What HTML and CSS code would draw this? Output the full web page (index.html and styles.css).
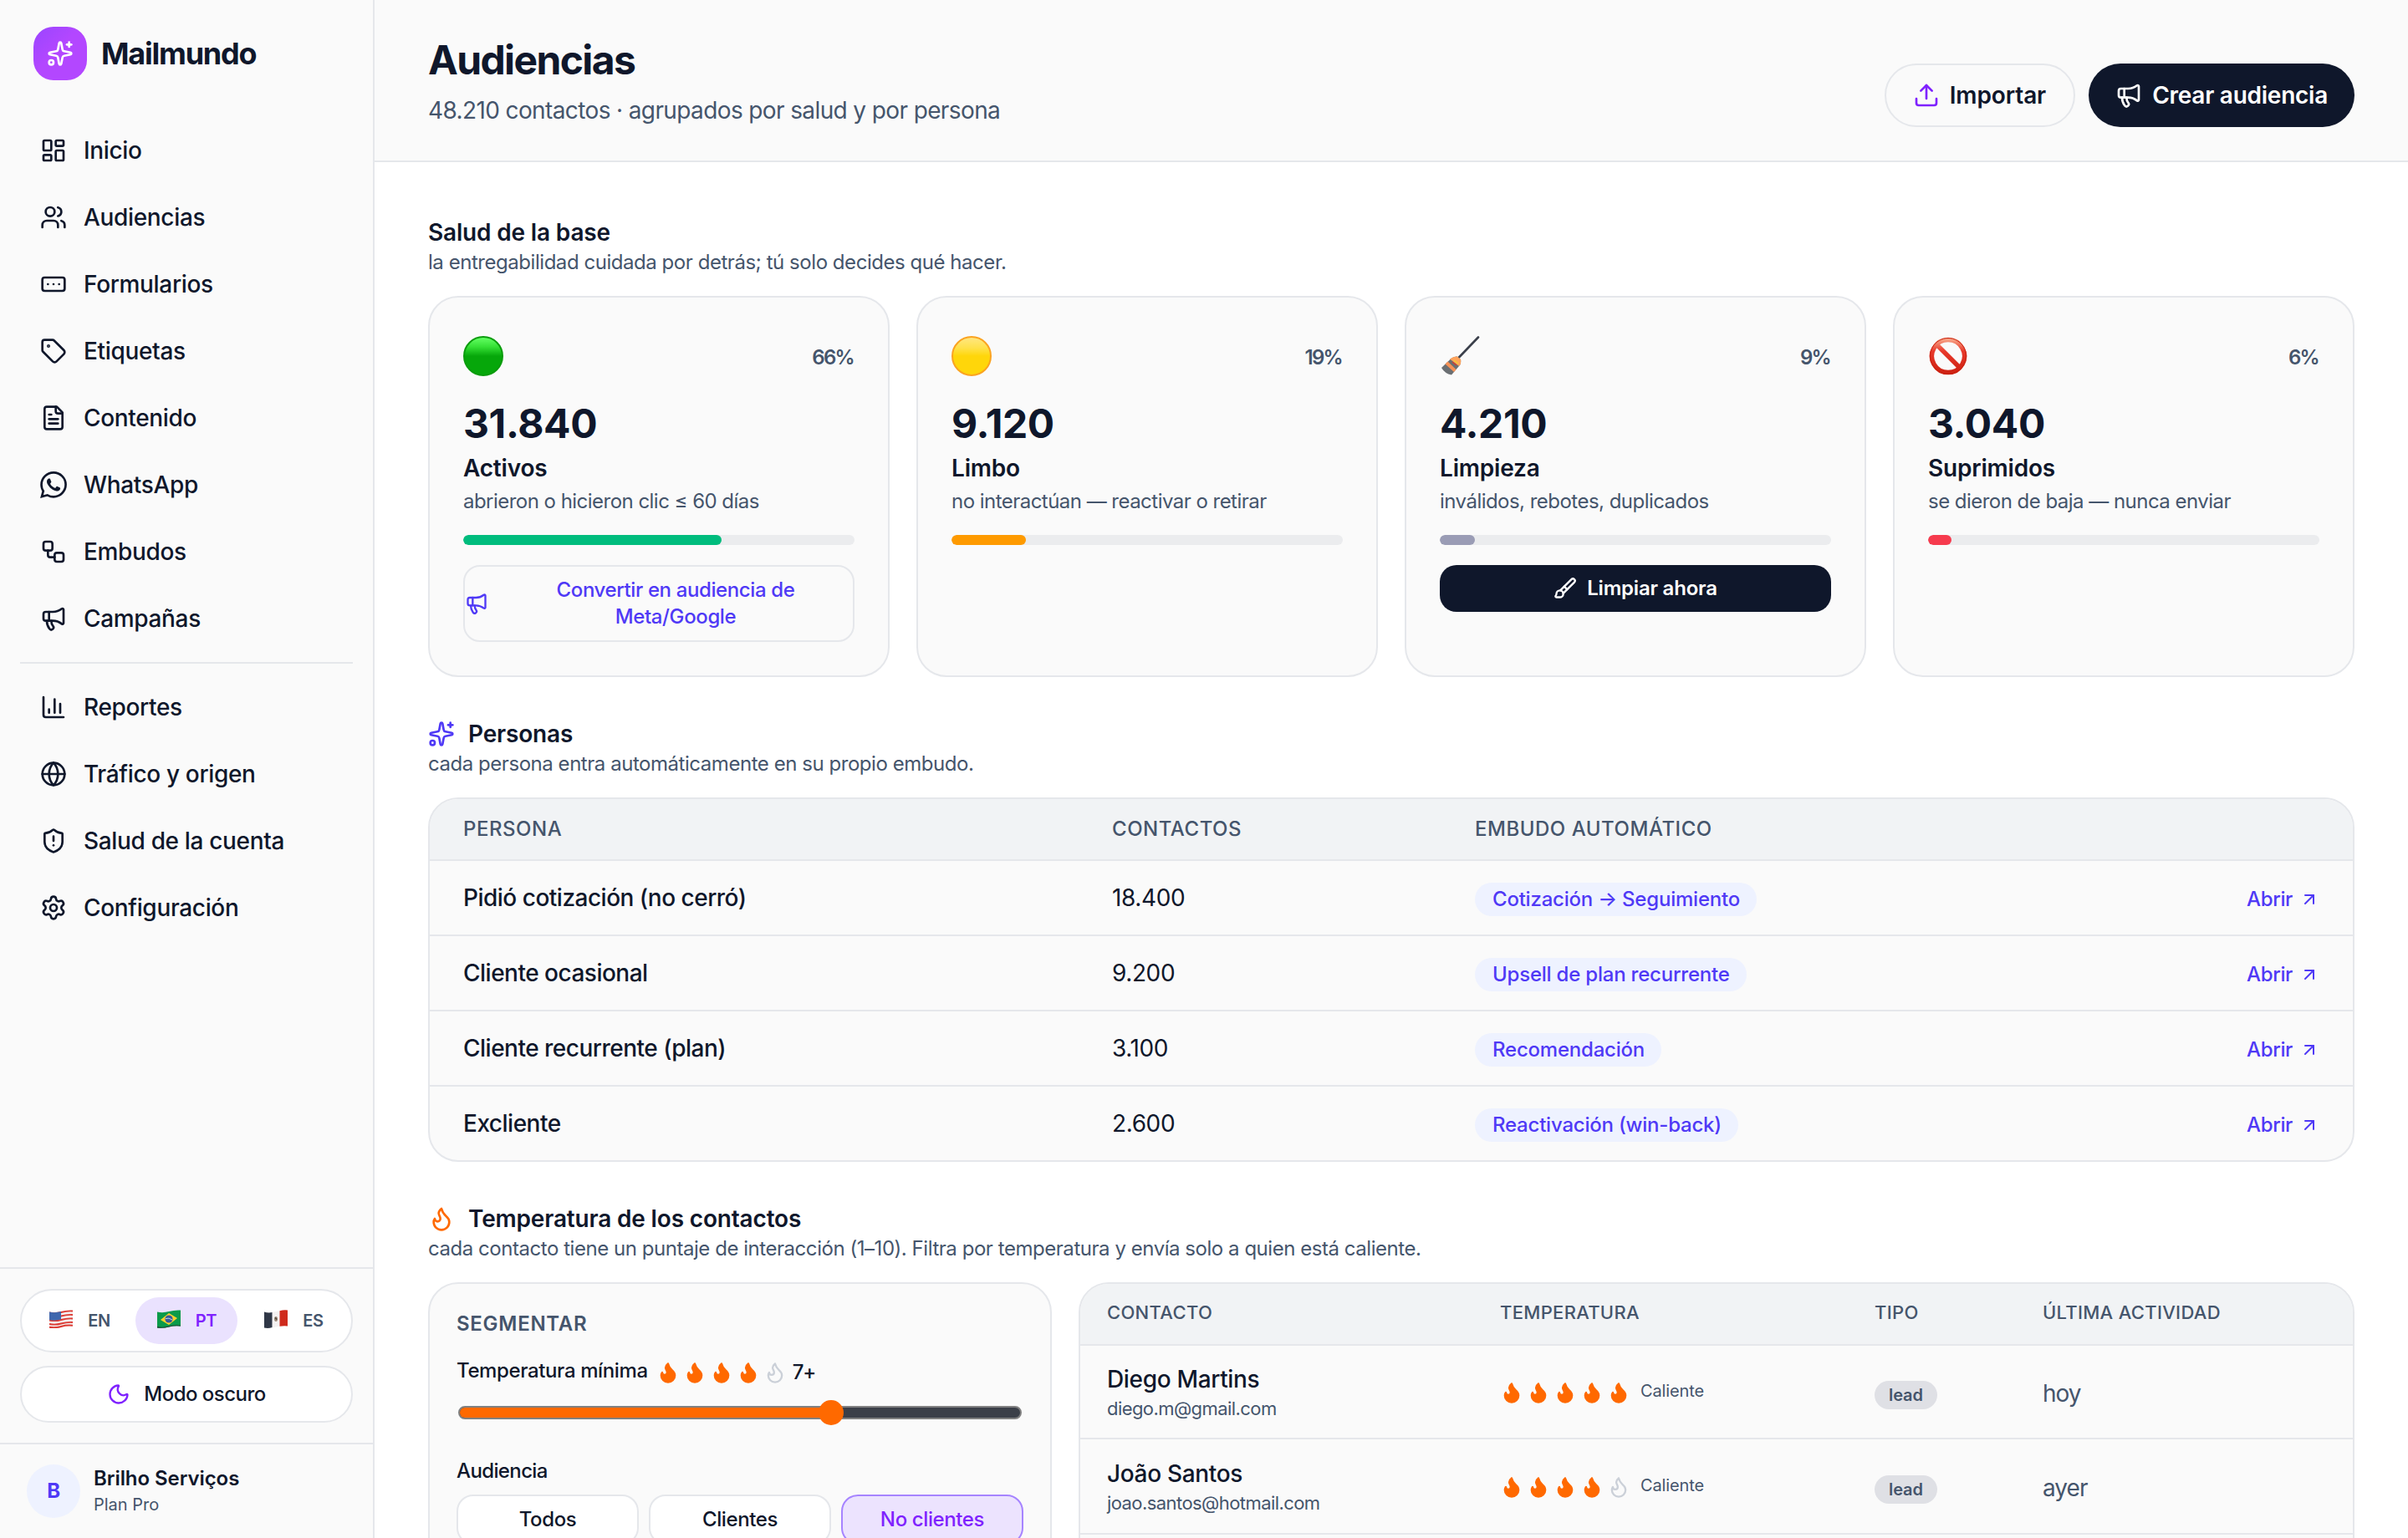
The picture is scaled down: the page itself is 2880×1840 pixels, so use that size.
FILE: index.html
```
<!DOCTYPE html>
<html lang="es">
<head>
    <meta charset="UTF-8">
    <meta name="viewport" content="width=device-width, initial-scale=1.0">
    <title>Mailmundo - Audiencias</title>
    <link rel="stylesheet" href="styles.css">
</head>
<body>
    <!-- Icon sprite -->
    <svg class="sprite" xmlns="http://www.w3.org/2000/svg">
        <symbol id="i-sparkles" viewBox="0 0 24 24"><path d="M11.017 2.814a1 1 0 0 1 1.966 0l1.051 5.558a2 2 0 0 0 1.594 1.594l5.558 1.051a1 1 0 0 1 0 1.966l-5.558 1.051a2 2 0 0 0-1.594 1.594l-1.051 5.558a1 1 0 0 1-1.966 0l-1.051-5.558a2 2 0 0 0-1.594-1.594l-5.558-1.051a1 1 0 0 1 0-1.966l5.558-1.051a2 2 0 0 0 1.594-1.594z"/><path d="M20 2v4"/><path d="M22 4h-4"/><circle cx="4" cy="20" r="2"/></symbol>
        <symbol id="i-dashboard" viewBox="0 0 24 24"><rect width="7" height="9" x="3" y="3" rx="1"/><rect width="7" height="5" x="14" y="3" rx="1"/><rect width="7" height="9" x="14" y="12" rx="1"/><rect width="7" height="5" x="3" y="16" rx="1"/></symbol>
        <symbol id="i-users" viewBox="0 0 24 24"><path d="M16 21v-2a4 4 0 0 0-4-4H6a4 4 0 0 0-4 4v2"/><path d="M16 3.128a4 4 0 0 1 0 7.744"/><path d="M22 21v-2a4 4 0 0 0-3-3.87"/><circle cx="9" cy="7" r="4"/></symbol>
        <symbol id="i-form" viewBox="0 0 24 24"><rect width="20" height="12" x="2" y="6" rx="2"/><path d="M12 12h.01"/><path d="M17 12h.01"/><path d="M7 12h.01"/></symbol>
        <symbol id="i-tag" viewBox="0 0 24 24"><path d="M12.586 2.586A2 2 0 0 0 11.172 2H4a2 2 0 0 0-2 2v7.172a2 2 0 0 0 .586 1.414l8.704 8.704a2.426 2.426 0 0 0 3.42 0l6.58-6.58a2.426 2.426 0 0 0 0-3.42z"/><circle cx="7.5" cy="7.5" r=".5" fill="currentColor"/></symbol>
        <symbol id="i-file" viewBox="0 0 24 24"><path d="M15 2H6a2 2 0 0 0-2 2v16a2 2 0 0 0 2 2h12a2 2 0 0 0 2-2V7Z"/><path d="M14 2v4a2 2 0 0 0 2 2h4"/><path d="M10 9H8"/><path d="M16 13H8"/><path d="M16 17H8"/></symbol>
        <symbol id="i-whatsapp" viewBox="0 0 24 24"><path fill="currentColor" stroke="none" d="M17.472 14.382c-.297-.149-1.758-.867-2.03-.967-.273-.099-.471-.148-.67.15-.197.297-.767.966-.94 1.164-.173.199-.347.223-.644.075-.297-.15-1.255-.463-2.39-1.475-.883-.788-1.48-1.761-1.653-2.059-.173-.297-.018-.458.13-.606.134-.133.298-.347.446-.52.149-.174.198-.298.298-.497.099-.198.05-.371-.025-.52-.075-.149-.669-1.612-.916-2.207-.242-.579-.487-.5-.669-.51-.173-.008-.371-.01-.57-.01-.198 0-.52.074-.792.372-.272.297-1.04 1.016-1.04 2.479 0 1.462 1.065 2.875 1.213 3.074.149.198 2.096 3.2 5.077 4.487.709.306 1.262.489 1.694.625.712.227 1.36.195 1.871.118.571-.085 1.758-.719 2.006-1.413.248-.694.248-1.289.173-1.413-.074-.124-.272-.198-.57-.347m-5.421 7.403h-.004a9.87 9.87 0 01-5.031-1.378l-.361-.214-3.741.982.998-3.648-.235-.374a9.86 9.86 0 01-1.51-5.26c.001-5.45 4.436-9.884 9.888-9.884 2.64 0 5.122 1.03 6.988 2.898a9.825 9.825 0 012.893 6.994c-.003 5.45-4.437 9.884-9.885 9.884m8.413-18.297A11.815 11.815 0 0012.05 0C5.495 0 .16 5.335.157 11.892c0 2.096.547 4.142 1.588 5.945L.057 24l6.305-1.654a11.882 11.882 0 005.683 1.448h.005c6.554 0 11.89-5.335 11.893-11.893a11.821 11.821 0 00-3.48-8.413Z"/></symbol>
        <symbol id="i-workflow" viewBox="0 0 24 24"><rect width="8" height="8" x="3" y="3" rx="2"/><path d="M7 11v4a2 2 0 0 0 2 2h4"/><rect width="8" height="8" x="13" y="13" rx="2"/></symbol>
        <symbol id="i-megaphone" viewBox="0 0 24 24"><path d="M11 6a13 13 0 0 0 8.4-2.8A1 1 0 0 1 21 4v12a1 1 0 0 1-1.6.8A13 13 0 0 0 11 14H5a2 2 0 0 1-2-2V8a2 2 0 0 1 2-2z"/><path d="M6 14a12 12 0 0 0 2.4 7.2 2 2 0 0 0 3.2-2.4A8 8 0 0 1 10 14"/><path d="M8 6v8"/></symbol>
        <symbol id="i-chart" viewBox="0 0 24 24"><path d="M3 3v16a2 2 0 0 0 2 2h16"/><path d="M18 17V9"/><path d="M13 17V5"/><path d="M8 17v-3"/></symbol>
        <symbol id="i-globe" viewBox="0 0 24 24"><circle cx="12" cy="12" r="10"/><path d="M12 2a14.5 14.5 0 0 0 0 20 14.5 14.5 0 0 0 0-20"/><path d="M2 12h20"/></symbol>
        <symbol id="i-shield" viewBox="0 0 24 24"><path d="M20 13c0 5-3.5 7.5-7.66 8.95a1 1 0 0 1-.67-.01C7.5 20.5 4 18 4 13V6a1 1 0 0 1 1-1c2 0 4.5-1.2 6.24-2.72a1.17 1.17 0 0 1 1.52 0C14.51 3.81 17 5 19 5a1 1 0 0 1 1 1z"/><path d="M12 8v4"/><path d="M12 16h.01"/></symbol>
        <symbol id="i-settings" viewBox="0 0 24 24"><path d="M9.671 4.136a2.34 2.34 0 0 1 4.659 0 2.34 2.34 0 0 0 3.319 1.915 2.34 2.34 0 0 1 2.33 4.033 2.34 2.34 0 0 0 0 3.831 2.34 2.34 0 0 1-2.33 4.033 2.34 2.34 0 0 0-3.319 1.915 2.34 2.34 0 0 1-4.659 0 2.34 2.34 0 0 0-3.32-1.915 2.34 2.34 0 0 1-2.33-4.033 2.34 2.34 0 0 0 0-3.831A2.34 2.34 0 0 1 6.35 6.051a2.34 2.34 0 0 0 3.319-1.915"/><circle cx="12" cy="12" r="3"/></symbol>
        <symbol id="i-moon" viewBox="0 0 24 24"><path d="M20.985 12.486a9 9 0 1 1-9.473-9.472c.405-.022.617.46.402.803a6 6 0 0 0 8.268 8.268c.344-.215.825-.004.803.401"/></symbol>
        <symbol id="i-upload" viewBox="0 0 24 24"><path d="M12 3v12"/><path d="m17 8-5-5-5 5"/><path d="M21 15v4a2 2 0 0 1-2 2H5a2 2 0 0 1-2-2v-4"/></symbol>
        <symbol id="i-flame" viewBox="0 0 24 24"><path d="M12 3q1 4 4 6.5t3 5.5a1 1 0 0 1-14 0 5 5 0 0 1 1-3 1 1 0 0 0 5 0c0-2-1.5-3-1.5-5q0-2 2.5-4"/></symbol>
        <symbol id="i-brush" viewBox="0 0 24 24"><path d="m11 10 3 3"/><path d="M6.5 21A3.5 3.5 0 1 0 3 17.5a2.62 2.62 0 0 1-.708 1.792A1 1 0 0 0 3 21z"/><path d="M9.969 17.031 21.378 5.624a1 1 0 0 0-3.002-3.002L6.967 14.031"/></symbol>
        <symbol id="i-arrow" viewBox="0 0 24 24"><path d="M7 7h10v10"/><path d="M7 17 17 7"/></symbol>
    </svg>

    <div class="app">
        <aside class="sidebar">
            <div class="brand">
                <span class="brand-logo"><svg class="icon"><use href="#i-sparkles"/></svg></span>
                <span class="brand-name">Mailmundo</span>
            </div>

            <nav class="nav">
                <a class="nav-item"><svg class="icon"><use href="#i-dashboard"/></svg>Inicio</a>
                <a class="nav-item"><svg class="icon"><use href="#i-users"/></svg>Audiencias</a>
                <a class="nav-item"><svg class="icon"><use href="#i-form"/></svg>Formularios</a>
                <a class="nav-item"><svg class="icon"><use href="#i-tag"/></svg>Etiquetas</a>
                <a class="nav-item"><svg class="icon"><use href="#i-file"/></svg>Contenido</a>
                <a class="nav-item"><svg class="icon"><use href="#i-whatsapp"/></svg>WhatsApp</a>
                <a class="nav-item"><svg class="icon"><use href="#i-workflow"/></svg>Embudos</a>
                <a class="nav-item"><svg class="icon"><use href="#i-megaphone"/></svg>Campañas</a>
                <div class="nav-divider"></div>
                <a class="nav-item"><svg class="icon"><use href="#i-chart"/></svg>Reportes</a>
                <a class="nav-item"><svg class="icon"><use href="#i-globe"/></svg>Tráfico y origen</a>
                <a class="nav-item"><svg class="icon"><use href="#i-shield"/></svg>Salud de la cuenta</a>
                <a class="nav-item"><svg class="icon"><use href="#i-settings"/></svg>Configuración</a>
            </nav>

            <div class="preferences">
                <div class="lang-switch">
                    <button class="lang">
                        <svg class="flag" viewBox="0 0 28 22">
                            <path d="M0 2.500Q7 4 14 2T28 .5V19.500Q21 18.500 14 20.500T0 21.500Z" fill="#f4eeee"/>
                            <path d="M0 3.500Q7 5 14 3T28 1.500M0 8Q7 9.500 14 7.500T28 6M0 12.500Q7 14 14 12T28 10.500M0 17Q7 18.500 14 16.500T28 15M0 20.800Q7 22 14 20T28 18.800" fill="none" stroke="#dc3a33" stroke-width="1.900"/>
                            <path d="M0 2.500Q7 4 14 2V11.500Q7 13.500 0 12Z" fill="#3f66ad"/>
                        </svg>
                        EN
                    </button>
                    <button class="lang active">
                        <svg class="flag" viewBox="0 0 28 22">
                            <path d="M0 2.500Q7 4 14 2T28 .5V19.500Q21 18.500 14 20.500T0 21.500Z" fill="#0a9a4a"/>
                            <path d="M0 20Q7 21.500 14 19.500T28 18.500V19.500Q21 18.500 14 20.500T0 21.500Z" fill="#1e4434"/>
                            <path d="M4 12 14 4 24 10 14 18Z" fill="#fdd22d"/>
                            <circle cx="14" cy="11" r="4.600" fill="#35599a"/>
                            <path d="M10 10.500q4-1.500 8 1.500" fill="none" stroke="#c9d6ea" stroke-width="1"/>
                        </svg>
                        PT
                    </button>
                    <button class="lang">
                        <svg class="flag" viewBox="0 0 28 22">
                            <path d="M0 2.500Q7 4 14 2T28 .5V19.500Q21 18.500 14 20.500T0 21.500Z" fill="#f5f2f2"/>
                            <path d="M0 2.500Q5 4 9.500 3V21Q5 22.500 0 21.500Z" fill="#2f3746"/>
                            <path d="M18.500 1.200Q23 0 28 .5V19.500Q23 19 18.500 19.800Z" fill="#cf2a1c"/>
                            <ellipse cx="14" cy="11" rx="2" ry="3" fill="#9c8a78"/>
                            <path d="M13 9.500l2.200 2" stroke="#4a4238" stroke-width="1.200"/>
                        </svg>
                        ES
                    </button>
                </div>
                <button class="theme-btn"><svg class="icon"><use href="#i-moon"/></svg>Modo oscuro</button>
            </div>

            <div class="account">
                <span class="avatar">B</span>
                <div>
                    <div class="account-name">Brilho Serviços</div>
                    <div class="account-plan">Plan Pro</div>
                </div>
            </div>
        </aside>

        <main class="main">
            <header class="page-header">
                <div>
                    <h1>Audiencias</h1>
                    <p class="subtitle">48.210 contactos · agrupados por salud y por persona</p>
                </div>
                <div class="header-actions">
                    <button class="btn btn-light"><svg class="icon"><use href="#i-upload"/></svg>Importar</button>
                    <button class="btn btn-dark"><svg class="icon"><use href="#i-megaphone"/></svg>Crear audiencia</button>
                </div>
            </header>

            <div class="content">
                <section>
                    <h2>Salud de la base</h2>
                    <p class="section-desc">la entregabilidad cuidada por detrás; tú solo decides qué hacer.</p>

                    <div class="health-grid">
                        <div class="card health-card">
                            <div class="health-top"><span class="dot dot-green"></span><span class="percent">66%</span></div>
                            <div class="number">31.840</div>
                            <div class="health-label">Activos</div>
                            <div class="health-desc">abrieron o hicieron clic ≤ 60 días</div>
                            <div class="bar"><div class="bar-fill green" style="width: 66%"></div></div>
                            <button class="card-btn outline"><svg class="icon"><use href="#i-megaphone"/></svg><span>Convertir en audiencia de<br>Meta/Google</span></button>
                        </div>

                        <div class="card health-card">
                            <div class="health-top"><span class="dot dot-yellow"></span><span class="percent">19%</span></div>
                            <div class="number">9.120</div>
                            <div class="health-label">Limbo</div>
                            <div class="health-desc">no interactúan — reactivar o retirar</div>
                            <div class="bar"><div class="bar-fill amber" style="width: 19%"></div></div>
                        </div>

                        <div class="card health-card">
                            <div class="health-top">
                                <svg class="emoji" viewBox="0 0 48 48">
                                    <path d="M46 1.500 23 25.500" stroke="#3a3f4a" stroke-width="2.600" stroke-linecap="round"/>
                                    <path d="M21 24.500 25 28Q26 33 23 36L14 46.500Q6 45 2 38L14 26.500Q18 24 21 24.500Z" fill="#6b6f73"/>
                                    <path d="M21 24.500 25 28Q26 33 23 36L12 27.500Q17 24 21 24.500Z" fill="#ffa35c"/>
                                    <path d="M9.500 30.500 19.500 40 17 43 6.500 33.500Z" fill="#f79256"/>
                                    <path d="M17 29l5 4" stroke="#f8c33a" stroke-width="2"/>
                                    <path d="M15 31l5 4" stroke="#d93c2c" stroke-width="1.500"/>
                                </svg>
                                <span class="percent">9%</span>
                            </div>
                            <div class="number">4.210</div>
                            <div class="health-label">Limpieza</div>
                            <div class="health-desc">inválidos, rebotes, duplicados</div>
                            <div class="bar"><div class="bar-fill gray" style="width: 9%"></div></div>
                            <button class="card-btn solid"><svg class="icon"><use href="#i-brush"/></svg>Limpiar ahora</button>
                        </div>

                        <div class="card health-card">
                            <div class="health-top">
                                <svg class="emoji" viewBox="0 0 48 48">
                                    <defs>
                                        <linearGradient id="ban" x1="0" y1="0" x2="0" y2="1">
                                            <stop offset="0" stop-color="#f7a184"/>
                                            <stop offset=".35" stop-color="#e8392b"/>
                                            <stop offset="1" stop-color="#cf2213"/>
                                        </linearGradient>
                                    </defs>
                                    <path d="M24 4.500a19.500 19.500 0 1 1-.01 0M10.500 10.500l27 27" fill="none" stroke="url(#ban)" stroke-width="5.500"/>
                                    <path d="M24 2.500a21.500 21.500 0 1 1-.01 0" fill="none" stroke="#c9210f" stroke-width="1"/>
                                </svg>
                                <span class="percent">6%</span>
                            </div>
                            <div class="number">3.040</div>
                            <div class="health-label">Suprimidos</div>
                            <div class="health-desc">se dieron de baja — nunca enviar</div>
                            <div class="bar"><div class="bar-fill red" style="width: 6%"></div></div>
                        </div>
                    </div>
                </section>

                <section>
                    <h2><svg class="icon indigo"><use href="#i-sparkles"/></svg>Personas</h2>
                    <p class="section-desc">cada persona entra automáticamente en su propio embudo.</p>

                    <div class="card table-card">
                        <table class="persona-table">
                            <thead>
                                <tr><th class="col-persona">Persona</th><th class="col-count">Contactos</th><th>Embudo automático</th><th class="col-open"></th></tr>
                            </thead>
                            <tbody>
                                <tr>
                                    <td class="strong">Pidió cotización (no cerró)</td>
                                    <td class="count">18.400</td>
                                    <td><span class="chip">Cotización → Seguimiento</span></td>
                                    <td><a class="open">Abrir<svg class="icon"><use href="#i-arrow"/></svg></a></td>
                                </tr>
                                <tr>
                                    <td class="strong">Cliente ocasional</td>
                                    <td class="count">9.200</td>
                                    <td><span class="chip">Upsell de plan recurrente</span></td>
                                    <td><a class="open">Abrir<svg class="icon"><use href="#i-arrow"/></svg></a></td>
                                </tr>
                                <tr>
                                    <td class="strong">Cliente recurrente (plan)</td>
                                    <td class="count">3.100</td>
                                    <td><span class="chip">Recomendación</span></td>
                                    <td><a class="open">Abrir<svg class="icon"><use href="#i-arrow"/></svg></a></td>
                                </tr>
                                <tr>
                                    <td class="strong">Excliente</td>
                                    <td class="count">2.600</td>
                                    <td><span class="chip">Reactivación (win-back)</span></td>
                                    <td><a class="open">Abrir<svg class="icon"><use href="#i-arrow"/></svg></a></td>
                                </tr>
                            </tbody>
                        </table>
                    </div>
                </section>

                <section>
                    <h2><svg class="icon orange"><use href="#i-flame"/></svg>Temperatura de los contactos</h2>
                    <p class="section-desc">cada contacto tiene un puntaje de interacción (1–10). Filtra por temperatura y envía solo a quien está caliente.</p>

                    <div class="temperature-grid">
                        <div class="card segment-card">
                            <div class="segment-title">Segmentar</div>
                            <div class="temp-row">
                                <span>Temperatura mínima</span>
                                <span class="flames" data-level="4"></span>
                                <span class="temp-value">7+</span>
                            </div>
                            <div class="slider">
                                <div class="slider-fill" style="width: 66.4%"></div>
                                <div class="slider-thumb" style="left: 66.3%"></div>
                            </div>
                            <div class="field-label">Audiencia</div>
                            <div class="options">
                                <button class="option">Todos</button>
                                <button class="option">Clientes</button>
                                <button class="option active">No clientes</button>
                            </div>
                        </div>

                        <div class="card table-card">
                            <table class="contact-table">
                                <thead>
                                    <tr><th class="col-contact">Contacto</th><th class="col-temp">Temperatura</th><th class="col-type">Tipo</th><th>Última actividad</th></tr>
                                </thead>
                                <tbody>
                                    <tr>
                                        <td><div class="contact-name">Diego Martins</div><div class="contact-mail">diego.m@gmail.com</div></td>
                                        <td><div class="temp-cell"><span class="flames" data-level="5"></span><span class="temp-text">Caliente</span></div></td>
                                        <td><span class="type-tag">lead</span></td>
                                        <td class="activity">hoy</td>
                                    </tr>
                                    <tr>
                                        <td><div class="contact-name">João Santos</div><div class="contact-mail">joao.santos@hotmail.com</div></td>
                                        <td><div class="temp-cell"><span class="flames" data-level="4"></span><span class="temp-text">Caliente</span></div></td>
                                        <td><span class="type-tag">lead</span></td>
                                        <td class="activity">ayer</td>
                                    </tr>
                                    <tr><td></td><td></td><td></td><td></td></tr>
                                </tbody>
                            </table>
                        </div>
                    </div>
                </section>
            </div>
        </main>
    </div>

    <script>
        // Fill each rating with 5 flames, the first N switched on
        document.querySelectorAll('.flames').forEach(el => {
            const level = Number(el.dataset.level);
            let html = '';
            for (let i = 0; i < 5; i++) {
                html += `<svg class="icon flame ${i < level ? 'on' : ''}"><use href="#i-flame"/></svg>`;
            }
            el.innerHTML = html;
        });
    </script>
</body>
</html>
```
FILE: styles.css
```
* {
    margin: 0;
    padding: 0;
    box-sizing: border-box;
}

body {
    font-family: Inter, 'Liberation Sans', sans-serif;
    font-size: 28px;
    line-height: 40px;
    letter-spacing: -0.012em;
    color: #0f172b;
    background: #fff;
    height: 1840px;
    overflow: hidden;
}

button {
    font: inherit;
    letter-spacing: inherit;
    color: inherit;
    border: none;
    background: none;
    cursor: pointer;
}

.sprite {
    display: none;
}

.icon {
    width: 32px;
    height: 32px;
    flex-shrink: 0;
    fill: none;
    stroke: currentColor;
    stroke-width: 2;
    stroke-linecap: round;
    stroke-linejoin: round;
}

.indigo {
    color: #4f39f6;
}

.orange {
    color: #ff6900;
}

.app {
    display: flex;
    height: 1840px;
    overflow: hidden;
}

/* Sidebar */
.sidebar {
    width: 448px;
    flex-shrink: 0;
    display: flex;
    flex-direction: column;
    background: #fafafa;
    border-right: 2px solid #e5e7eb;
}

.brand {
    display: flex;
    align-items: center;
    gap: 17px;
    padding: 32px 40px 0;
}

.brand-logo {
    width: 64px;
    height: 64px;
    border-radius: 24px;
    display: flex;
    align-items: center;
    justify-content: center;
    color: #fff;
    background: linear-gradient(135deg, #9a45ff, #b347ff 45%);
}

.brand-name {
    font-size: 36px;
    font-weight: 700;
    letter-spacing: -0.034em;
}

.nav {
    flex: 1;
    display: flex;
    flex-direction: column;
    gap: 4px;
    padding: 46px 24px 0;
}

.nav-item {
    display: flex;
    align-items: center;
    gap: 20px;
    height: 76px;
    padding: 0 24px;
    font-weight: 500;
}

.nav-divider {
    height: 2px;
    margin: 10px 0;
    background: #e5e7eb;
}

.preferences {
    display: flex;
    flex-direction: column;
    gap: 16px;
    padding: 24px;
    border-top: 2px solid #e5e7eb;
}

.lang-switch {
    display: flex;
    gap: 6px;
    height: 76px;
    padding: 8px;
    background: #fff;
    border: 2px solid #e5e7eb;
    border-radius: 38px;
}

.lang {
    flex: 1;
    display: flex;
    align-items: center;
    justify-content: center;
    gap: 18px;
    padding-bottom: 1px;
    padding-left: 1px;
    border-radius: 28px;
    font-size: 20px;
    font-weight: 600;
    color: #45556c;
}

.lang.active {
    color: #7f22fe;
    background: #eae2fe;
}

.flag {
    width: 28px;
    height: 22px;
    margin-bottom: 3px;
}

.theme-btn {
    display: flex;
    align-items: center;
    justify-content: center;
    gap: 16px;
    height: 68px;
    background: #fff;
    border: 2px solid #e5e7eb;
    border-radius: 34px;
    font-size: 24px;
    font-weight: 500;
    letter-spacing: -0.022em;
}

.theme-btn .icon {
    width: 28px;
    height: 28px;
    color: #7f22fe;
}

.account {
    display: flex;
    align-items: center;
    gap: 16px;
    padding: 24px 32px;
    border-top: 2px solid #e5e7eb;
}

.avatar {
    width: 64px;
    height: 64px;
    border-radius: 50%;
    display: flex;
    align-items: center;
    justify-content: center;
    font-size: 24px;
    font-weight: 700;
    color: #4f39f6;
    background: #eef2ff;
}

.account-name {
    font-size: 24px;
    line-height: 32px;
    font-weight: 600;
    letter-spacing: -0.003em;
}

.account-plan {
    font-size: 20px;
    line-height: 30px;
    letter-spacing: 0;
    color: #45556c;
}

/* Header */
.main {
    flex: 1;
    min-width: 0;
}

.page-header {
    display: flex;
    justify-content: space-between;
    align-items: flex-end;
    height: 194px;
    padding: 40px 64px;
    background: #fafafa;
    border-bottom: 2px solid #e5e7eb;
}

h1 {
    font-size: 48px;
    line-height: 64px;
    font-weight: 700;
    letter-spacing: -0.034em;
}

.subtitle {
    margin-top: 8px;
    letter-spacing: -0.022em;
    color: #45556c;
}

.header-actions {
    display: flex;
    gap: 16px;
}

.btn {
    display: flex;
    align-items: center;
    gap: 12px;
    height: 76px;
    padding: 0 32px;
    border-radius: 38px;
    font-weight: 600;
    letter-spacing: -0.009em;
}

.btn-light {
    padding: 0 33px 0 32px;
    border: 2px solid #e5e7eb;
    letter-spacing: -0.004em;
}

.btn-light .icon {
    color: #7f22fe;
}

.btn-dark {
    color: #fff;
    background: #0f172b;
}

/* Sections */
.content {
    display: flex;
    flex-direction: column;
    gap: 48px;
    padding: 64px;
}

h2 {
    display: flex;
    align-items: center;
    gap: 16px;
    font-size: 28px;
    line-height: 40px;
    font-weight: 600;
    letter-spacing: -0.006em;
}

.section-desc {
    font-size: 24px;
    line-height: 32px;
    letter-spacing: -0.019em;
    color: #45556c;
    margin-bottom: 24px;
}

.card {
    background: #fafafa;
    border: 2px solid #e5e7eb;
    border-radius: 36px;
}

/* Health cards */
.health-grid {
    display: grid;
    grid-template-columns: repeat(4, 1fr);
    gap: 32px;
}

.health-card {
    padding: 40px;
}

.health-top {
    display: flex;
    align-items: center;
    justify-content: space-between;
    height: 60px;
}

.dot {
    width: 48px;
    height: 48px;
    border-radius: 50%;
}

.dot-green {
    border: 2px solid #0a9c0c;
    background: linear-gradient(#63ff63, #35e035 25%, #06a70a 50%);
}

.dot-yellow {
    border: 2px solid #fba320;
    background: linear-gradient(#ffe680, #ffe14a 28%, #ffd60a 50%);
}

.emoji {
    width: 48px;
    height: 48px;
}

.percent {
    font-size: 24px;
    font-weight: 600;
    letter-spacing: -0.07em;
    color: #45556c;
    padding-top: 3px;
    padding-right: 1px;
}

.number {
    margin-top: 27px;
    font-size: 48px;
    line-height: 48px;
    font-weight: 700;
    letter-spacing: -0.008em;
}

.health-label {
    margin-top: 9px;
    font-weight: 600;
    letter-spacing: -0.007em;
}

.health-desc {
    margin-top: 4px;
    font-size: 24px;
    line-height: 32px;
    letter-spacing: -0.022em;
    color: #45556c;
}

.bar {
    height: 12px;
    margin-top: 24px;
    border-radius: 6px;
    background: #ebecee;
    overflow: hidden;
}

.bar-fill {
    height: 100%;
    border-radius: 6px;
}

.bar-fill.green {
    background: #00bc7d;
}

.bar-fill.amber {
    background: #fe9a00;
}

.bar-fill.gray {
    background: #9a9cb5;
}

.bar-fill.red {
    background: #f63b4e;
}

.card-btn {
    display: flex;
    align-items: center;
    justify-content: center;
    gap: 12px;
    width: 100%;
    margin-top: 24px;
    border-radius: 20px;
    font-size: 24px;
    line-height: 32px;
}

.card-btn .icon {
    width: 28px;
    height: 28px;
}

.card-btn.outline {
    padding: 12px 0;
    border: 2px solid #e5e7eb;
    font-weight: 500;
    letter-spacing: -0.016em;
    color: #4f39f6;
}

.card-btn.outline span {
    flex: 1;
}

.card-btn.solid {
    padding: 12px 0;
    font-weight: 600;
    letter-spacing: -0.009em;
    color: #fff;
    background: #0f172b;
}

/* Tables */
.table-card {
    overflow: hidden;
}

table {
    width: 100%;
    table-layout: fixed;
    border-collapse: separate;
    border-spacing: 0;
}

th {
    text-align: left;
    text-transform: uppercase;
    font-size: 24px;
    font-weight: 500;
    letter-spacing: 0.022em;
    color: #45556c;
    background: #f1f3f5;
    border-bottom: 2px solid #e5e7eb;
}

td {
    border-bottom: 2px solid #e5e7eb;
}

tbody tr:last-child td {
    border-bottom: none;
}

.persona-table th {
    height: 74px;
    padding: 0 40px;
}

.persona-table td {
    height: 90px;
    padding: 0 40px;
}

.persona-table tr:last-child td {
    height: 88px;
}

.persona-table .col-persona {
    width: 776px;
}

.persona-table .col-count {
    width: 434px;
}

.persona-table .col-open {
    width: 240px;
}

.strong {
    font-weight: 500;
    letter-spacing: -0.018em;
}

.count {
    letter-spacing: -0.014em;
}

.chip {
    display: table;
    margin-top: 4px;
    padding: 4px 20px 4px 21px;
    border-radius: 20px;
    font-size: 24px;
    line-height: 32px;
    font-weight: 500;
    letter-spacing: -0.009em;
    color: #4f39f6;
    background: #eef2ff;
}

.open {
    display: flex;
    align-items: center;
    justify-content: flex-end;
    gap: 8px;
    padding-top: 3px;
    font-size: 24px;
    font-weight: 500;
    letter-spacing: -0.015em;
    color: #4f39f6;
}

.open .icon {
    width: 24px;
    height: 24px;
}

/* Temperature */
.temperature-grid {
    display: grid;
    grid-template-columns: 746px 1fr;
    gap: 32px;
}

.segment-card {
    height: 700px;
    padding: 32px;
    font-size: 24px;
    line-height: 32px;
    font-weight: 500;
    letter-spacing: -0.016em;
}

.segment-title {
    font-weight: 600;
    text-transform: uppercase;
    letter-spacing: 0.03em;
    color: #45556c;
}

.temp-row {
    display: flex;
    align-items: center;
    margin-top: 20px;
    height: 40px;
}

.flames {
    display: flex;
    gap: 4px;
}

.flame {
    width: 28px;
    height: 28px;
    color: #cbd0d8;
}

.flame.on {
    color: #ff6900;
    fill: #ff6900;
}

.temp-row .flames {
    margin-left: 10px;
    padding-top: 4px;
}

.temp-value {
    margin-left: 7px;
    padding-top: 4px;
    letter-spacing: -0.05em;
}

.slider {
    position: relative;
    height: 16px;
    margin: 22px 2px 0;
    border: 2px solid #808080;
    border-radius: 8px;
    background: #3b3f48;
}

.slider-fill {
    height: 100%;
    border-radius: 6px 0 0 6px;
    background: #ff6900;
}

.slider-thumb {
    position: absolute;
    top: -9px;
    width: 30px;
    height: 30px;
    margin-left: -15px;
    border-radius: 50%;
    background: #ff6900;
}

.field-label {
    margin-top: 46px;
    letter-spacing: -0.026em;
}

.options {
    display: grid;
    grid-template-columns: repeat(3, 1fr);
    gap: 12px;
    margin-top: 12px;
}

.option {
    height: 60px;
    border: 2px solid #e5e7eb;
    border-radius: 20px;
    background: #fff;
}

.option.active {
    color: #7f22fe;
    border-color: #a684ff;
    background: #ece3fe;
}

.contact-table th {
    height: 74px;
    padding: 0 32px 4px;
    font-size: 22px;
    letter-spacing: 0.014em;
}

.contact-table td {
    height: 112px;
    padding: 0 32px;
}

.contact-table tr:nth-child(2) td {
    height: 114px;
}

.contact-table .col-contact {
    width: 470px;
}

.contact-table .col-temp {
    width: 448px;
}

.contact-table .col-type {
    width: 201px;
}

.contact-name {
    font-weight: 500;
    letter-spacing: -0.012em;
}

.contact-mail {
    font-size: 22px;
    line-height: 30px;
    letter-spacing: -0.026em;
    color: #45556c;
}

.temp-cell {
    display: flex;
    align-items: center;
    gap: 12px;
    padding-top: 1px;
}

.temp-text {
    font-size: 20px;
    line-height: 28px;
    letter-spacing: -0.006em;
    padding-bottom: 3px;
    color: #45556c;
}

.type-tag {
    display: table;
    margin-top: 8px;
    padding: 2px 17px;
    border-radius: 17px;
    font-size: 20px;
    line-height: 30px;
    font-weight: 600;
    letter-spacing: -0.004em;
    color: #45556c;
    background: #dfe0e5;
}

.activity {
    padding-top: 3px !important;
    letter-spacing: -0.035em;
    color: #45556c;
}
```
